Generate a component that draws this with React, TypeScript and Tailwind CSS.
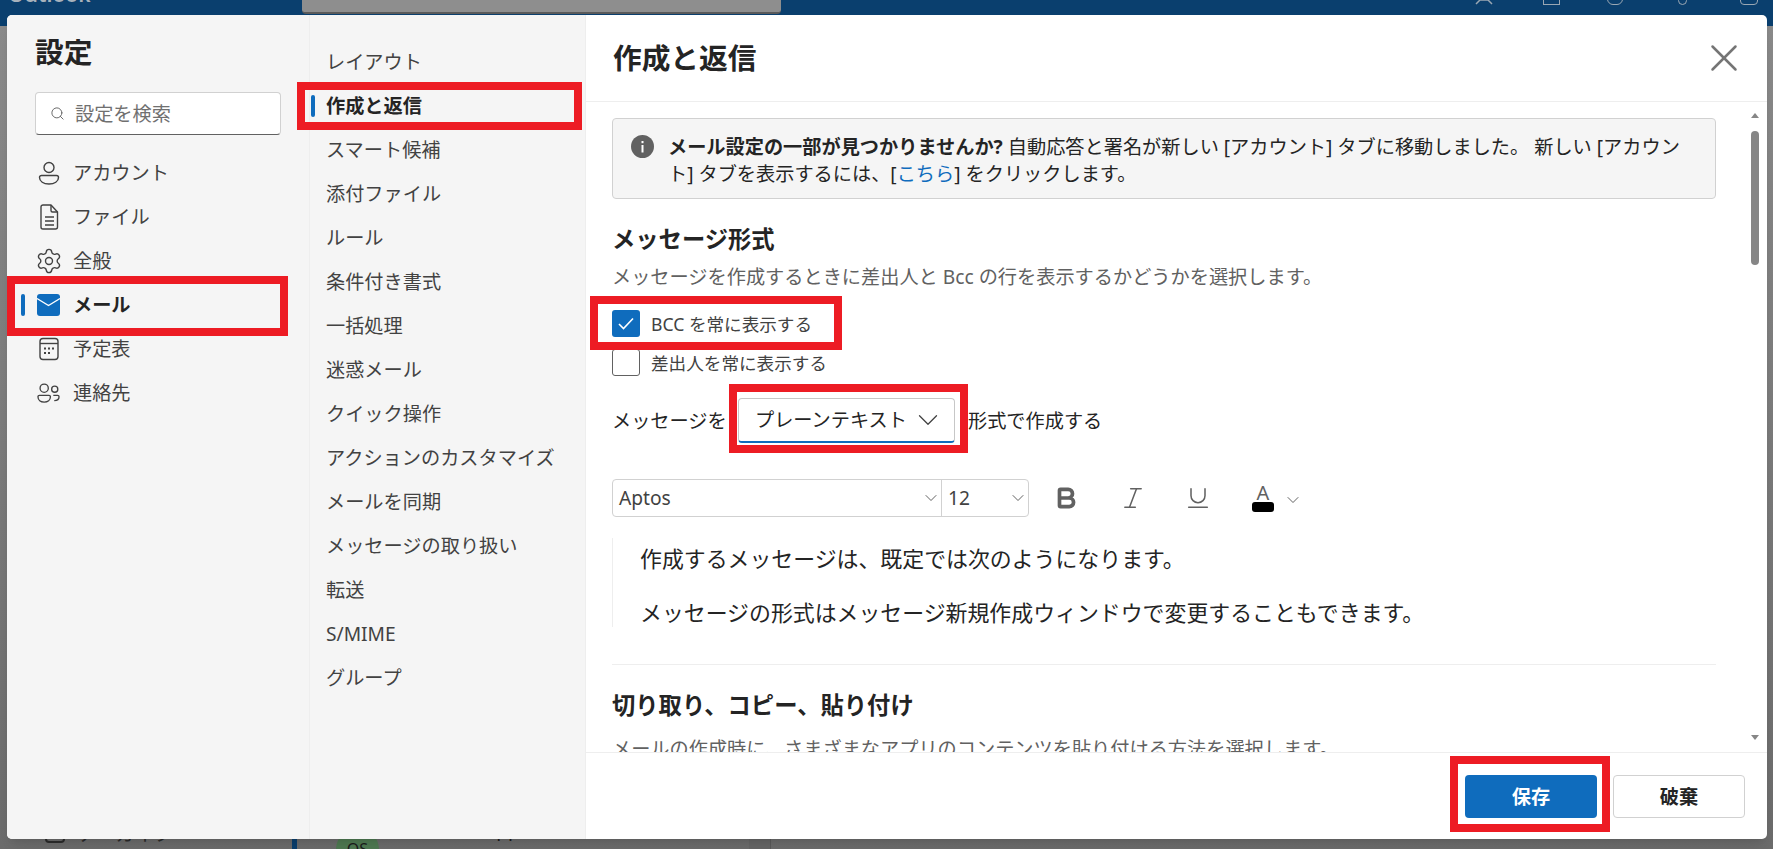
import React from 'react';
import { Bold, ChevronDown, Italic, Search, Settings, Underline, X } from 'lucide-react';

const PersonIcon = () => (
  <svg width="22" height="24" viewBox="0 0 22 24" fill="none" stroke="#424242" strokeWidth="1.4">
    <circle cx="11" cy="6.5" r="5" />
    <path d="M3.5 14.5h15a2 2 0 0 1 2 2c0 4-4 6.500-9.500 6.500S1.500 20.500 1.500 16.500a2 2 0 0 1 2-2z" />
  </svg>
);

const FileIcon = () => (
  <svg width="22" height="26" viewBox="0 0 22 26" fill="none" stroke="#424242" strokeWidth="1.4" strokeLinejoin="round">
    <path d="M5 1h8l6.500 7v15a2 2 0 0 1-2 2H5a2 2 0 0 1-2-2V3a2 2 0 0 1 2-2z" />
    <path d="M13 1v5.500a1.500 1.500 0 0 0 1.500 1.500h5" />
    <path d="M7 13h9M7 17h9M7 21h9" />
  </svg>
);

const MailIcon = () => (
  <svg width="23" height="22" viewBox="0 0 23 22">
    <rect x="0" y="0" width="23" height="22" rx="3" fill="#0f6cbd" />
    <path d="M0 4.500l11.500 7 11.500-7" fill="none" stroke="#ffffff" strokeWidth="1.4" />
  </svg>
);

const CalendarIcon = () => (
  <svg width="22" height="24" viewBox="0 0 22 24" fill="none" stroke="#424242" strokeWidth="1.4">
    <rect x="2" y="1.500" width="18" height="21" rx="3" />
    <path d="M2 6.500h18" />
    <g fill="#424242" stroke="none">
      <rect x="6" y="10.500" width="2" height="2" />
      <rect x="10" y="10.500" width="2" height="2" />
      <rect x="14" y="10.500" width="2" height="2" />
      <rect x="6" y="15" width="2" height="2" />
      <rect x="10" y="15" width="2" height="2" />
    </g>
  </svg>
);

const PeopleIcon = () => (
  <svg width="24" height="22" viewBox="0 0 24 22" fill="none" stroke="#424242" strokeWidth="1.4">
    <circle cx="7.500" cy="6" r="4.300" />
    <circle cx="18.500" cy="7" r="3.200" />
    <path d="M2.500 13.500h10a1.500 1.500 0 0 1 1.500 1.500c0 3.200-2.800 5.500-6.500 5.500S1 18.200 1 15a1.500 1.500 0 0 1 1.500-1.500z" />
    <path d="M17 13.500h4.500A1.500 1.500 0 0 1 23 15c0 2.500-2 4-5 4" />
  </svg>
);

const primaryNav = [
  { label: 'アカウント', icon: <PersonIcon /> },
  { label: 'ファイル', icon: <FileIcon /> },
  { label: '全般', icon: <Settings size={28} strokeWidth={1.2} color="#424242" className="shrink-0" /> },
  { label: 'メール', icon: <MailIcon />, active: true },
  { label: '予定表', icon: <CalendarIcon /> },
  { label: '連絡先', icon: <PeopleIcon /> },
];

const secondaryNav = [
  'レイアウト',
  '作成と返信',
  'スマート候補',
  '添付ファイル',
  'ルール',
  '条件付き書式',
  '一括処理',
  '迷惑メール',
  'クイック操作',
  'アクションのカスタマイズ',
  'メールを同期',
  'メッセージの取り扱い',
  '転送',
  'S/MIME',
  'グループ',
];

const RedBox = ({ className }: { className: string }) => (
  <div className={`absolute border-[8px] border-[#ed1c24] pointer-events-none ${className}`} />
);

const App = () => {
  return (
    <div className="relative w-[1773px] h-[849px] overflow-hidden bg-gradient-to-b from-[#8c8c8c] to-[#6c6c6c] font-['Noto_Sans','Noto_Sans_CJK_JP',sans-serif] text-[19.2px] leading-[28px] text-[#242424]">
      {/* dimmed mailbox behind the dialog */}
      <div className="absolute left-0 top-0 w-full h-[26px] bg-[#0a3f6e]" />
      <div className="absolute left-[8px] top-[-22px] text-[21px] leading-[32px] font-semibold text-[#a8b2bc]">Outlook</div>
      <div className="absolute left-[302px] top-[-4px] w-[479px] h-[18px] rounded-[4px] bg-[#8e8e8e] border-b-2 border-[#5a5a5a]" />
      <div className="absolute left-[1475px] top-[-8px] flex items-end">
        <svg width="18" height="13" viewBox="0 0 18 13" fill="none" stroke="#9aa7b3" strokeWidth="1.5">
          <path d="M1 12l4-4h8l4 4" />
        </svg>
        <div className="ml-[50px] w-[17px] h-[12px] border border-[#9aa7b3]" />
        <div className="ml-[47px] w-[16px] h-[12px] border border-[#9aa7b3] rounded-full" />
        <div className="ml-[55px] w-[9px] h-[12px] border border-[#9aa7b3] rounded-full" />
        <div className="ml-[53px] w-[18px] h-[12px] border border-[#9aa7b3] rounded" />
      </div>
      <div className="absolute left-[45px] top-[826px] w-[20px] h-[17px] rounded border-2 border-[#2c2c2c]" />
      <div className="absolute left-[78px] top-[820px] text-[#2c2c2c]">アーカイブ</div>
      <div className="absolute left-[292px] top-[830px] w-[5px] h-[19px] bg-[#0a3f6e]" />
      <div className="absolute left-[336px] top-[828px] w-[43px] h-[43px] rounded-full bg-[#4f7a52] text-center leading-[43px] text-[16px] text-[#1c1c1c]">OS</div>
      <div className="absolute left-[394px] top-[815px] text-[#1c1c1c]">Contoso Support</div>
      <div className="absolute left-[749px] top-[830px] w-[22px] h-[19px] bg-[#666666] border-r border-[#5a5a5a]" />

      {/* settings dialog */}
      <div className="absolute left-[7px] top-[15px] w-[1760px] h-[824px] flex rounded-[5px] overflow-hidden bg-white shadow-lg">
        <div className="w-[302px] shrink-0 bg-[#f5f5f5] pt-[19px]">
          <div className="pl-[28px] text-[28.7px] leading-[36px] font-semibold">設定</div>
          <div className="ml-[28px] mt-[22px] w-[246px] h-[43px] flex items-center gap-[10px] pl-[14px] rounded-[4px] bg-white border border-[#d1d1d1] border-b-[#616161] text-[#707070]">
            <Search size={15} strokeWidth={1.5} color="#616161" />
            <span>設定を検索</span>
          </div>
          <div className="mt-[16px]">
            {primaryNav.map((item) => (
              <div key={item.label} className="h-[44px] flex items-center pl-[14px]">
                <div className={`w-[4px] h-[22px] rounded-full mr-[12px] ${item.active ? 'bg-[#0f6cbd]' : ''}`} />
                <div className="w-[23px] mr-[13px] flex justify-center">{item.icon}</div>
                <span className={item.active ? 'font-bold text-[#242424]' : 'text-[#424242]'}>{item.label}</span>
              </div>
            ))}
          </div>
        </div>

        <div className="w-[276px] shrink-0 bg-[#f5f5f5] border-l border-[#eeeeee] pt-[25px]">
          {secondaryNav.map((label, index) => (
            <div key={label} className="h-[44px] flex items-center pl-[1px]">
              <div className={`w-[4px] h-[22px] rounded-full mr-[11px] ${index === 1 ? 'bg-[#0f6cbd]' : ''}`} />
              <span className={index === 1 ? 'font-bold text-[#242424]' : 'text-[#424242]'}>{label}</span>
            </div>
          ))}
        </div>

        <div className="flex-1 min-w-0 flex flex-col border-l border-[#eeeeee]">
          <div className="h-[87px] shrink-0 flex items-center justify-between pl-[27px] pr-[20px] border-b border-[#eeeeee]">
            <div className="text-[28.7px] leading-[36px] font-semibold">作成と返信</div>
            <X size={46} strokeWidth={1.3} color="#757575" />
          </div>

          <div className="relative flex-1 min-h-0 overflow-hidden pl-[26px] pt-[16px]">
            <div className="w-[1104px]">
              <div className="h-[81px] flex rounded-[4px] bg-[#f5f5f5] border border-[#d1d1d1] pl-[18px] pt-[14px]">
                <svg width="23" height="23" viewBox="0 0 23 23" className="shrink-0 mt-[2px]">
                  <circle cx="11.500" cy="11.500" r="11.500" fill="#616161" />
                  <rect x="10.500" y="10" width="2" height="7.500" fill="#ffffff" />
                  <rect x="10.500" y="6" width="2" height="2.200" fill="#ffffff" />
                </svg>
                <div className="ml-[14px] leading-[27px] whitespace-nowrap">
                  <span className="font-bold">メール設定の一部が見つかりませんか?</span> 自動応答と署名が新しい [アカウント] タブに移動しました。 新しい [アカウン
                  <br />
                  ト] タブを表示するには、[<span className="text-[#0f6cbd]">こちら</span>] をクリックします。
                </div>
              </div>

              <div className="mt-[24px] text-[23.3px] leading-[32px] font-semibold">メッセージ形式</div>
              <div className="mt-[8px] text-[#616161]">メッセージを作成するときに差出人と Bcc の行を表示するかどうかを選択します。</div>

              <div className="mt-[19px] h-[27px] flex items-center gap-[11px] text-[17.6px]">
                <div className="w-[28px] h-[27px] rounded-[3px] bg-[#0f6cbd] flex items-center justify-center">
                  <svg width="16" height="13" viewBox="0 0 16 13" fill="none" stroke="#ffffff" strokeWidth="1.6">
                    <path d="M1 7l4.500 4.500L15 1.500" />
                  </svg>
                </div>
                <span className="text-[#424242]">BCC を常に表示する</span>
              </div>
              <div className="mt-[12px] h-[27px] flex items-center gap-[11px] text-[17.6px]">
                <div className="w-[28px] h-[27px] rounded-[3px] bg-white border border-[#616161]" />
                <span className="text-[#424242]">差出人を常に表示する</span>
              </div>

              <div className="mt-[22px] h-[45px] flex items-center">
                <span className="w-[126px] shrink-0">メッセージを</span>
                <div className="w-[217px] h-[45px] shrink-0 flex items-center pl-[16px] rounded-[4px] bg-white border border-[#c7c7c7] border-b-2 border-b-[#0f6cbd]">
                  <span className="w-[156px] shrink-0 whitespace-nowrap">プレーンテキスト</span>
                  <ChevronDown size={34} strokeWidth={0.9} color="#424242" className="shrink-0" />
                </div>
                <span className="ml-[13px]">形式で作成する</span>
              </div>

              <div className="mt-[36px] h-[38px] flex items-center">
                <div className="w-[417px] h-[38px] flex rounded-[4px] border border-[#d1d1d1] text-[#424242]">
                  <div className="w-[329px] flex items-center justify-between pl-[6px] border-r border-[#d1d1d1]">
                    <span>Aptos</span>
                    <ChevronDown size={20} strokeWidth={1} color="#424242" />
                  </div>
                  <div className="flex-1 flex items-center justify-between pl-[6px]">
                    <span>12</span>
                    <ChevronDown size={20} strokeWidth={1} color="#424242" />
                  </div>
                </div>
                <div className="flex items-center ml-[24px] text-[#616161]">
                  <Bold size={26} strokeWidth={3.4} />
                  <Italic size={28} strokeWidth={1.3} className="ml-[40px]" />
                  <Underline size={28} strokeWidth={1.3} className="ml-[37px]" />
                  <div className="ml-[40px] w-[22px] flex flex-col items-center">
                    <span className="text-[20px] leading-[18px] text-[#616161]">A</span>
                    <div className="w-[22px] h-[10px] rounded-[3px] bg-black" />
                  </div>
                  <ChevronDown size={20} strokeWidth={1} color="#424242" className="ml-[9px] mt-[4px]" />
                </div>
              </div>

              <div className="mt-[21px] h-[89px] pt-[5px] pl-[27px] border-l border-[#eeeeee] flex flex-col gap-[22px] text-[21.9px] leading-[32px]">
                <div>作成するメッセージは、既定では次のようになります。</div>
                <div className="whitespace-nowrap">メッセージの形式はメッセージ新規作成ウィンドウで変更することもできます。</div>
              </div>

              <div className="mt-[37px] h-px bg-[#eeeeee]" />

              <div className="mt-[24px] text-[23.3px] leading-[32px] font-semibold">切り取り、コピー、貼り付け</div>
              <div className="mt-[14px] text-[#616161]">メールの作成時に、さまざまなアプリのコンテンツを貼り付ける方法を選択します。</div>
            </div>

            {/* scrollbar */}
            <div className="absolute right-[8px] top-0 bottom-0 w-[8px]">
              <div className="absolute left-0 top-[11px] w-0 h-0 border-x-[4px] border-x-transparent border-b-[5px] border-b-[#868686]" />
              <div className="absolute left-0 top-[29px] w-[8px] h-[134px] rounded-full bg-[#868686]" />
              <div className="absolute left-0 top-[633px] w-0 h-0 border-x-[4px] border-x-transparent border-t-[5px] border-t-[#868686]" />
            </div>
          </div>

          <div className="h-[87px] shrink-0 flex justify-end gap-[16px] pt-[22px] pr-[22px] border-t border-[#eeeeee] font-semibold">
            <div className="w-[132px] h-[43px] flex items-center justify-center rounded-[4px] bg-[#0f6cbd] text-white">保存</div>
            <div className="w-[132px] h-[43px] flex items-center justify-center rounded-[4px] bg-white border border-[#d1d1d1]">破棄</div>
          </div>
        </div>
      </div>

      {/* red callouts drawn on top of the screenshot */}
      <RedBox className="left-[7px] top-[276px] w-[281px] h-[60px]" />
      <RedBox className="left-[297px] top-[82px] w-[285px] h-[48px]" />
      <RedBox className="left-[590px] top-[296px] w-[252px] h-[54px]" />
      <RedBox className="left-[729px] top-[384px] w-[239px] h-[69px]" />
      <RedBox className="left-[1450px] top-[756px] w-[160px] h-[76px]" />
    </div>
  );
};

export default App;
